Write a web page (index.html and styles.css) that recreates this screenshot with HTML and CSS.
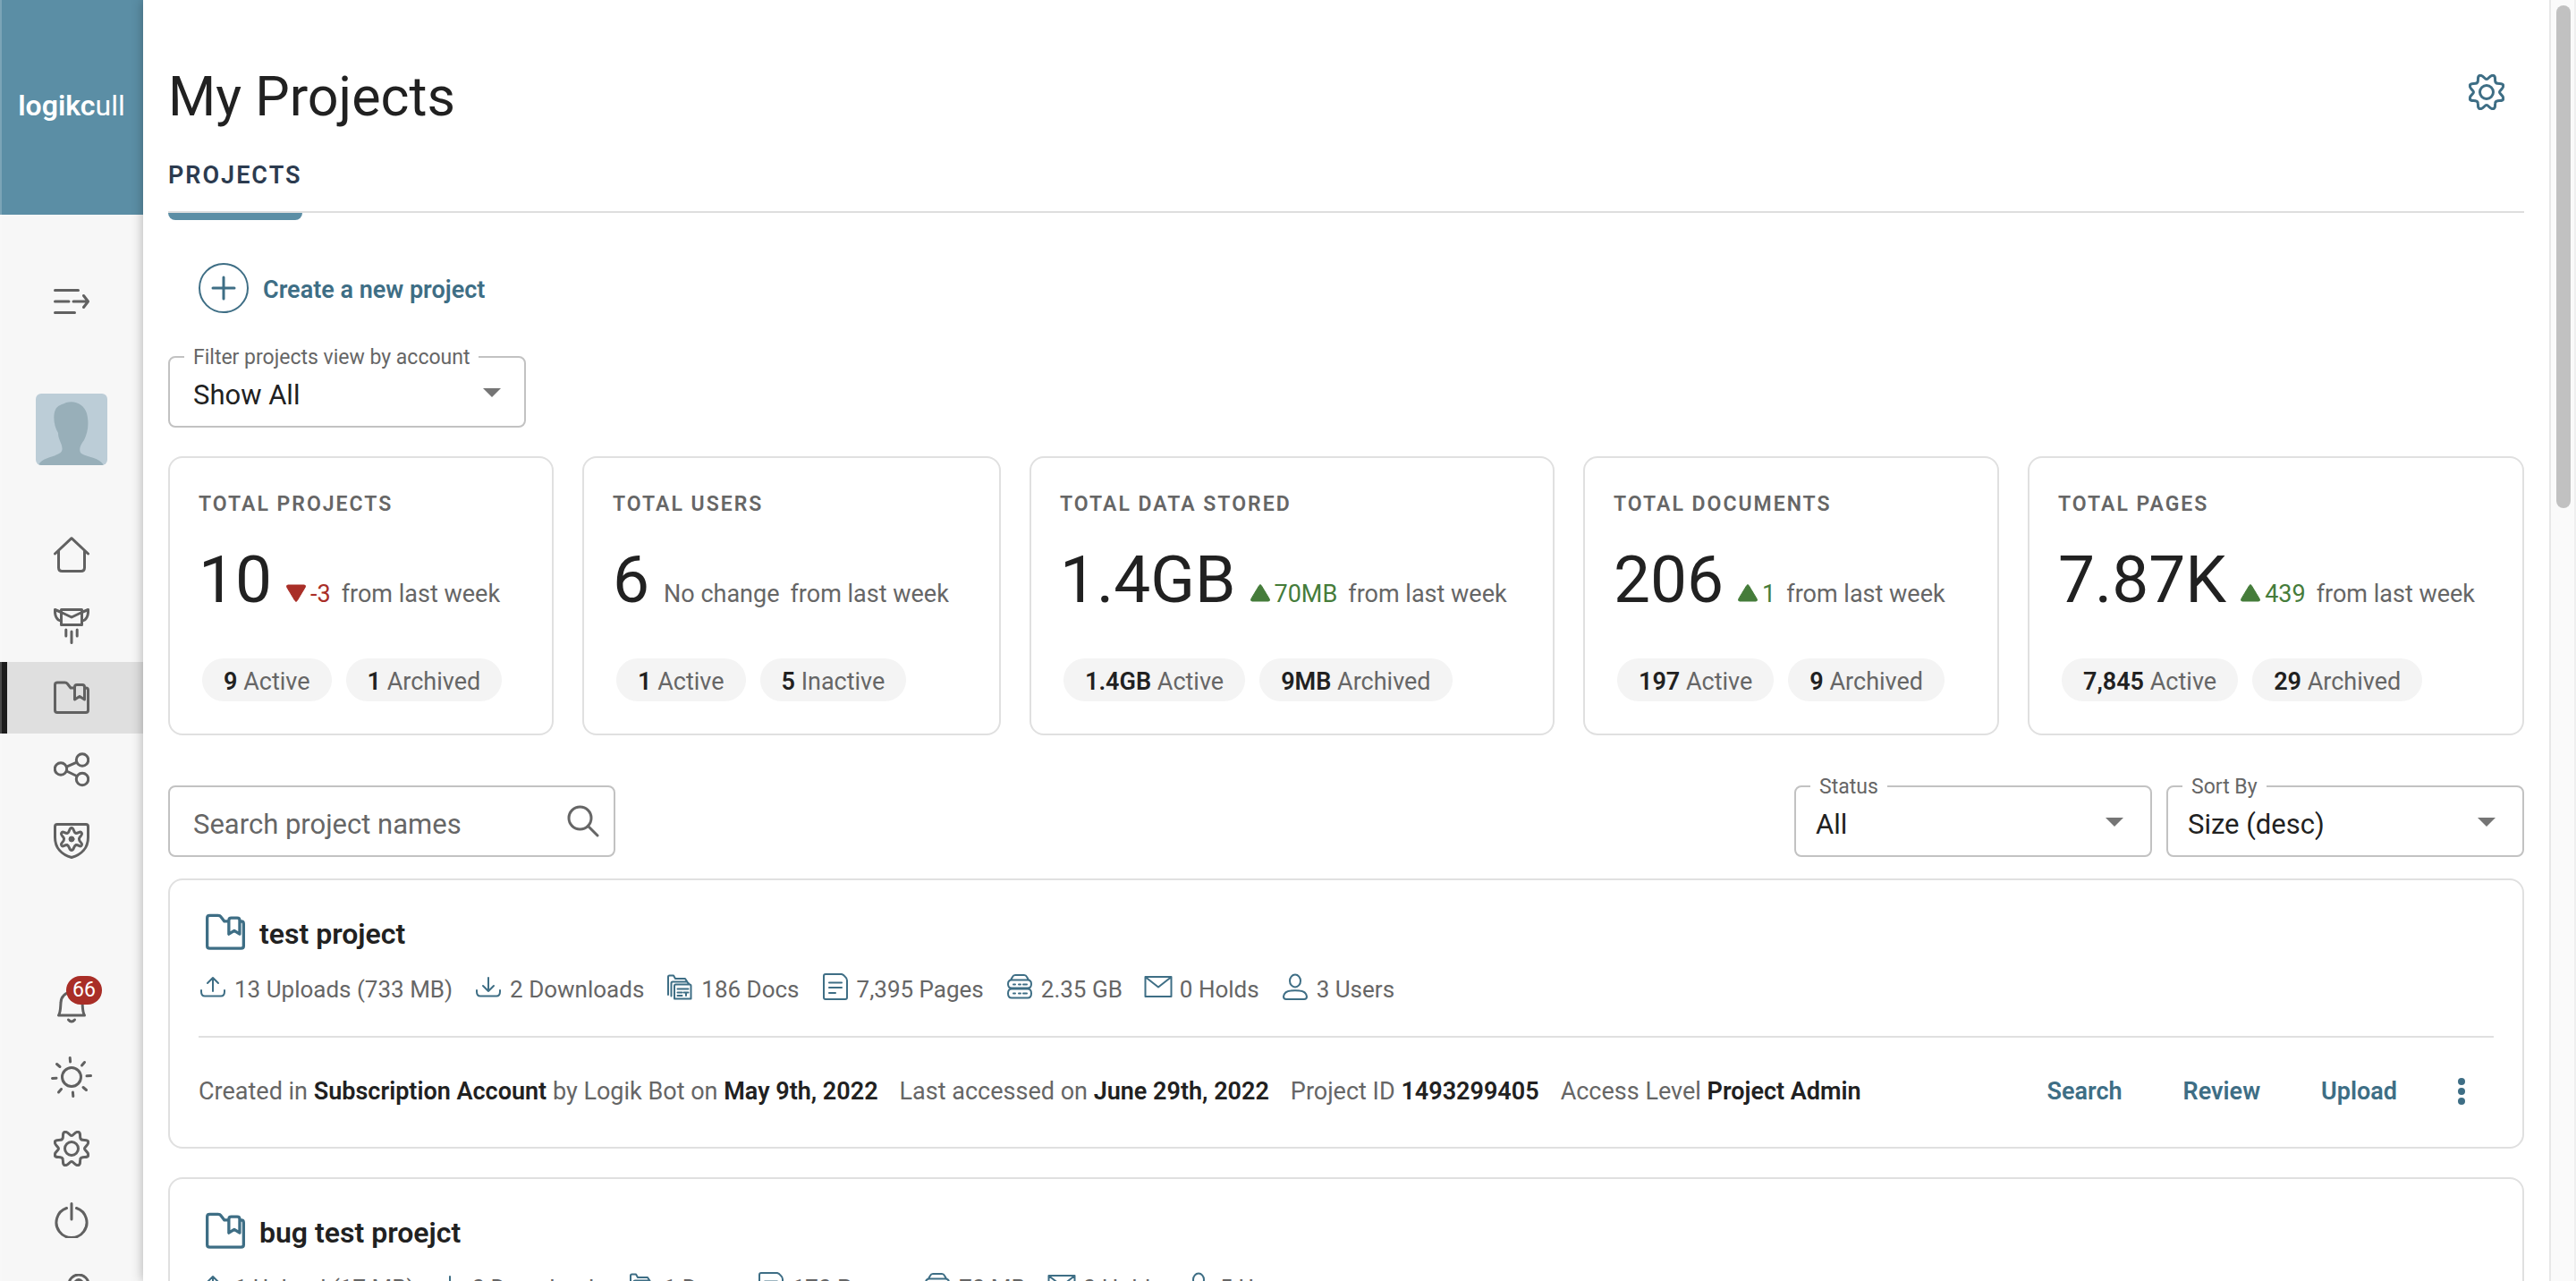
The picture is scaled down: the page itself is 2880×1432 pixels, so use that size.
FILE: index.html
```html
<!DOCTYPE html>
<html lang="en">
<head>
<meta charset="utf-8">
<title>My Projects</title>
<link rel="stylesheet" href="styles.css">
</head>
<body>
<svg class="sprite" aria-hidden="true">
  <symbol id="i-menu" viewBox="0 0 40 40"><path d="M1.5 8.500h26M1.5 21H17M22 21h16M33.500 14.500L38.500 21l-5 6.500M1.500 33.500H23.500"/></symbol>
  <symbol id="i-home" viewBox="0 0 40 40"><path d="M1.500 19L20 1.700 38.500 19M5.500 16v18.500q0 4 4 4h21q4 0 4-4V16"/></symbol>
  <symbol id="i-mailwings" viewBox="0 0 40 40"><path d="M8.500 1.500h23v17h-23zM1.500 1.500L8.500 4.500 20 10l11.500-5.500 7-3C39 8 36.500 14 31.500 14M1.500 1.500C1 8 3.500 14 8.500 14M13.800 24v7M20 26v12.500M26.200 24v7"/></symbol>
  <symbol id="i-folder" viewBox="0 0 40 40"><path d="M23.500 9H19l-3.500-4.500Q14.500 3 12.500 3H4Q1.500 3 1.500 5.500v28.500q0 2.500 2.500 2.500h32q2.500 0 2.500-2.500V11.500Q38.500 9 36 9h-1.500M23.500 22V8q0-2.500 2.500-2.500h6q2.500 0 2.500 2.500v14L29 18.500z"/></symbol>
  <symbol id="i-share" viewBox="0 0 40 40"><circle cx="8" cy="19.500" r="6.700"/><circle cx="32" cy="9.500" r="6.700"/><circle cx="32" cy="31" r="6.700"/><path d="M14.500 17.200l11.300-5M14.500 22l11.300 5.500"/></symbol>
  <symbol id="i-shield" viewBox="0 0 40 40"><path d="M4 1.500h32q2.500 0 2.500 2.500v12C38.500 28 31 35.500 20 38.500 9 35.500 1.500 28 1.500 16V4q0-2.500 2.500-2.500z"/><path d="M20 5.500C23 5.500 22 11 25 11.500C28 11.500 30 8 31.500 11.500C32.500 14.500 28 15 28.500 18C28 21 32.500 22 31.500 24.500C30 28 28 24 25 24.500C22 25.500 23 30.500 20 30.500C17 30.500 18 25.500 15 24.500C12 24 10 28 8.500 24.500C7.500 22 12 21 11.500 18C12 15 7.500 14.500 8.500 11.500C10 8 12 11.500 15 11.500C18 11 17 5.500 20 5.500z"/><circle class="solid" cx="20" cy="18" r="3"/></symbol>
  <symbol id="i-bell" viewBox="0 0 40 40"><path d="M5.500 31h29C32 27 32.500 21 32 17A12 12 0 0 0 8 17C7.500 21 8 27 5.500 31zM16.500 36q3.500 4 7 0"/></symbol>
  <symbol id="i-sun" viewBox="0 0 48 48"><circle cx="24" cy="24" r="10.500"/><path d="M22.200 2.500l.4 4.500M25.400 41l.4 4.500M2.500 25.500L7 25.200M41 22.800l4.500-.3M7.500 9.500l3.500 3M37 35.500l3.500 3M38.500 7.500l-3 3.500M12.500 37.500l-3 3.500"/></symbol>
  <symbol id="i-gear" viewBox="0 0 40 40"><path d="M20 5.500C17.800 5.500 16.500 1.300 13 1.300C9.500 1.300 10.800 5 10.300 7.800C10.100 9.300 9.300 10.100 7.800 10.300C5 10.800 1.300 9.500 1.300 13C1.300 16.500 5.500 17.800 5.500 20C5.500 22.200 1.300 23.500 1.300 27C1.300 30.500 5 29.200 7.800 29.700C9.300 29.900 10.100 30.700 10.300 32.200C10.800 35 9.500 38.700 13 38.700C16.500 38.700 17.800 34.500 20 34.500C22.200 34.500 23.500 38.700 27 38.700C30.500 38.700 29.200 35 29.700 32.200C29.900 30.700 30.700 29.900 32.200 29.700C35 29.200 38.700 30.500 38.700 27C38.700 23.500 34.500 22.200 34.500 20C34.500 17.800 38.700 16.500 38.700 13C38.700 9.500 35 10.800 32.200 10.300C30.700 10.100 29.900 9.300 29.700 7.800C29.200 5 30.500 1.300 27 1.300C23.500 1.300 22.200 5.500 20 5.500z"/><circle cx="20" cy="20" r="7.500"/></symbol>
  <symbol id="i-power" viewBox="0 0 40 40"><path d="M14.500 6.500a17 17 0 1 0 11 0M20 1.500v17.500"/></symbol>
  <symbol id="i-help" viewBox="0 0 40 40"><circle cx="28" cy="12" r="11"/><path d="M24 9q4-5 8 0v4l-4 3M2 38q6-8 16-8"/></symbol>
  <symbol id="i-plus" viewBox="0 0 28 28"><path d="M14 2v24M2 14h24"/></symbol>
  <symbol id="i-search" viewBox="0 0 36 36"><circle cx="14.500" cy="14.500" r="12.500"/><path d="M23.500 23.500L34 34"/></symbol>
  <symbol id="i-up" viewBox="0 0 22 20"><path class="solid" d="M9.800 1.500q1.200-1.800 2.400 0l9 15q1 2.500-1.200 2.500H2Q-.2 19 .8 16.500z"/></symbol>
  <symbol id="i-down" viewBox="0 0 22 20"><path class="solid" d="M9.800 18.500q1.200 1.800 2.400 0l9-15Q22.200 1 20 1H2Q-.2 1 .8 3.500z"/></symbol>
  <symbol id="i-upload" viewBox="0 0 32 32"><path d="M3 19v1.500Q3 25.500 7 25.500h18q4 0 4-5V19M16 5v15M10 11l6-6 6 6"/></symbol>
  <symbol id="i-download" viewBox="0 0 32 32"><path d="M3 19v1.500Q3 25.500 7 25.500h18q4 0 4-5V19M16 5v15M10 14l6 6 6-6"/></symbol>
  <symbol id="i-docs" viewBox="0 0 32 32"><path d="M3 24V4q0-1.500 1.500-1.500H9L11 6h11l2 3M6.500 25.500V11q0-1.500 1.500-1.500h16l3 3M10 28.500V14q0-1.500 1.500-1.500H27q1.500 0 1.500 1.500v14.500zM13.500 17.500h12M13.500 21.500h5M13.500 25h5M20.500 21.500h5M23 21.500V25"/></symbol>
  <symbol id="i-page" viewBox="0 0 32 32"><path d="M5 1h18q2 .5 3.500 2.500Q29 5.500 29 8v19q0 2-2 2H5q-2 0-2-2V3q0-2 2-2zM9 10.500h14M9 16h14M9 22h7"/></symbol>
  <symbol id="i-data" viewBox="0 0 32 32"><path d="M6 7.500L8 4q1-2 3-2h10q2 0 3 2l2 3.500M7 7.500h18q4 0 4 4.500t-4 4.500H7q-4 0-4-4.500t4-4.500zM7 17.500h18q4 0 4 5t-4 5H7q-4 0-4-5t4-5zM9 12.500h2M15 12.500h2M20 12.500h4M9 22.500h2M15 22.500h2M20 22.500h4"/></symbol>
  <symbol id="i-hold" viewBox="0 0 32 32"><path d="M1.500 4h29v22h-29zM2 4.500l14 11 14-11"/></symbol>
  <symbol id="i-user" viewBox="0 0 32 32"><ellipse cx="16" cy="8.500" rx="6" ry="7"/><path d="M3 26q1-6 8-6.500 5-.5 10 0 7 .5 8 6.500 0 3-3 3H6q-3 0-3-3z"/></symbol>
</svg>

<div class="app">
  <aside class="sidebar">
    <a class="logo" href="#" aria-label="logikcull home"><span>logikc</span><span class="logo-tail">ull</span></a>
    <button class="toggle" type="button" aria-label="Expand menu"><svg class="icon"><use href="#i-menu"/></svg></button>
    <a class="avatar" href="#" aria-label="Profile">
      <svg viewBox="0 0 80 80"><path d="M3 80C6 72 20 71 26 67C30 65 30 62 29 58C28 54 25 50 25 44C20 36 19 24 22 18C24 13 30 12 34 10C44 7 54 12 57 22C60 34 58 44 54 52C50 57 48 62 50 66C54 71 70 70 76 80z"/></svg>
    </a>
    <nav class="nav" aria-label="Main">
      <a href="#" aria-label="Home"><svg class="icon"><use href="#i-home"/></svg></a>
      <a href="#" aria-label="Holds"><svg class="icon"><use href="#i-mailwings"/></svg></a>
      <a href="#" class="current" aria-current="page" aria-label="Projects"><svg class="icon"><use href="#i-folder"/></svg></a>
      <a href="#" aria-label="Shares"><svg class="icon"><use href="#i-share"/></svg></a>
      <a href="#" aria-label="Admin"><svg class="icon"><use href="#i-shield"/></svg></a>
    </nav>
    <nav class="nav nav-tools" aria-label="Tools">
      <a href="#" aria-label="Notifications"><svg class="icon"><use href="#i-bell"/></svg><span class="badge">66</span></a>
      <a href="#" aria-label="Theme"><svg class="icon icon-sun"><use href="#i-sun"/></svg></a>
      <a href="#" aria-label="Settings"><svg class="icon"><use href="#i-gear"/></svg></a>
      <a href="#" aria-label="Log out"><svg class="icon"><use href="#i-power"/></svg></a>
      <a href="#" aria-label="Help"><svg class="icon"><use href="#i-help"/></svg></a>
    </nav>
  </aside>

  <main class="main">
    <header class="header">
      <h1>My Projects</h1>
      <button class="settings" type="button" aria-label="Page settings"><svg class="icon"><use href="#i-gear"/></svg></button>
    </header>
    <nav class="tabs" aria-label="Sections"><a class="tab" href="#" aria-current="page">PROJECTS</a></nav>

    <button class="create" type="button"><span class="create-ring"><svg><use href="#i-plus"/></svg></span><span class="create-label">Create a new project</span></button>

    <div class="field">
      <label for="account">Filter projects view by account</label>
      <select id="account"><option>Show All</option></select>
    </div>

    <section class="totals" aria-label="Totals">
      <article class="total">
        <h2>TOTAL PROJECTS</h2>
        <p class="figure"><span class="value">10</span><span class="change down"><svg><use href="#i-down"/></svg>-3</span><span class="since">from last week</span></p>
        <p class="pills"><span class="pill"><b>9</b> Active</span><span class="pill"><b>1</b> Archived</span></p>
      </article>
      <article class="total">
        <h2>TOTAL USERS</h2>
        <p class="figure"><span class="value">6</span><span class="change">No change</span><span class="since">from last week</span></p>
        <p class="pills"><span class="pill"><b>1</b> Active</span><span class="pill"><b>5</b> Inactive</span></p>
      </article>
      <article class="total">
        <h2>TOTAL DATA STORED</h2>
        <p class="figure"><span class="value">1.4GB</span><span class="change up"><svg><use href="#i-up"/></svg>70MB</span><span class="since">from last week</span></p>
        <p class="pills"><span class="pill"><b>1.4GB</b> Active</span><span class="pill"><b>9MB</b> Archived</span></p>
      </article>
      <article class="total">
        <h2>TOTAL DOCUMENTS</h2>
        <p class="figure"><span class="value">206</span><span class="change up"><svg><use href="#i-up"/></svg>1</span><span class="since">from last week</span></p>
        <p class="pills"><span class="pill"><b>197</b> Active</span><span class="pill"><b>9</b> Archived</span></p>
      </article>
      <article class="total">
        <h2>TOTAL PAGES</h2>
        <p class="figure"><span class="value">7.87K</span><span class="change up"><svg><use href="#i-up"/></svg>439</span><span class="since">from last week</span></p>
        <p class="pills"><span class="pill"><b>7,845</b> Active</span><span class="pill"><b>29</b> Archived</span></p>
      </article>
    </section>

    <div class="toolbar">
      <div class="search">
        <input type="search" placeholder="Search project names" aria-label="Search project names">
        <svg><use href="#i-search"/></svg>
      </div>
      <div class="field field-compact">
        <label for="status">Status</label>
        <select id="status"><option>All</option></select>
      </div>
      <div class="field field-compact">
        <label for="sort">Sort By</label>
        <select id="sort"><option>Size (desc)</option></select>
      </div>
    </div>

    <section class="projects" aria-label="Projects">
      <article class="project">
        <h3><svg class="icon"><use href="#i-folder"/></svg>test project</h3>
        <ul class="stats">
          <li><svg><use href="#i-upload"/></svg>13 Uploads (733 MB)</li>
          <li><svg><use href="#i-download"/></svg>2 Downloads</li>
          <li><svg><use href="#i-docs"/></svg>186 Docs</li>
          <li><svg><use href="#i-page"/></svg>7,395 Pages</li>
          <li><svg><use href="#i-data"/></svg>2.35 GB</li>
          <li><svg><use href="#i-hold"/></svg>0 Holds</li>
          <li><svg><use href="#i-user"/></svg>3 Users</li>
        </ul>
        <footer class="details">
          <p class="meta">
            <span>Created in <b>Subscription Account</b> by Logik Bot on <b>May 9th, 2022</b></span>
            <span>Last accessed on <b>June 29th, 2022</b></span>
            <span>Project ID <b>1493299405</b></span>
            <span>Access Level <b>Project Admin</b></span>
          </p>
          <div class="actions">
            <a href="#">Search</a>
            <a href="#">Review</a>
            <a href="#">Upload</a>
            <button class="more" type="button" aria-label="More actions"><i></i><i></i><i></i></button>
          </div>
        </footer>
      </article>
      <article class="project">
        <h3><svg class="icon"><use href="#i-folder"/></svg>bug test proejct</h3>
        <ul class="stats">
          <li><svg><use href="#i-upload"/></svg>1 Upload (17 MB)</li>
          <li><svg><use href="#i-download"/></svg>0 Downloads</li>
          <li><svg><use href="#i-docs"/></svg>1 Docs</li>
          <li><svg><use href="#i-page"/></svg>170 Pages</li>
          <li><svg><use href="#i-data"/></svg>70 MB</li>
          <li><svg><use href="#i-hold"/></svg>0 Holds</li>
          <li><svg><use href="#i-user"/></svg>5 Users</li>
        </ul>
      </article>
    </section>
  </main>
  <div class="scrollbar" aria-hidden="true"><div class="thumb"></div></div>
</div>
</body>
</html>
```
FILE: styles.css
```css
:root {
  --blue: #3e6e85;
  --teal: #5b8ea5;
  --ink: #212121;
  --grey: #666;
  --line: #e0e0e0;
  --outline: #c2c2c2;
}

*, ::before, ::after { box-sizing: border-box; }

body {
  margin: 0;
  background: #fff;
  color: var(--grey);
  font-family: Roboto, "Noto Sans", sans-serif;
  font-size: 27px;
}

h1, h2, h3, p, ul { margin: 0; padding: 0; }
a { color: inherit; text-decoration: none; }
button { border: 0; padding: 0; background: none; font: inherit; color: inherit; cursor: pointer; }
svg { display: block; flex: none; fill: none; stroke: currentColor; stroke-linecap: round; stroke-linejoin: round; overflow: visible; }
.sprite { position: absolute; width: 0; height: 0; }
.solid { fill: currentColor; stroke-width: 1; }
.icon { width: 40px; height: 40px; stroke-width: 3; }

.app { display: flex; height: 100vh; overflow: hidden; }

/* Sidebar */
.sidebar {
  position: relative;
  flex: none;
  display: flex;
  flex-direction: column;
  align-items: center;
  width: 160px;
  background: #f7f7f7;
  color: #616161;
}
.sidebar::after {
  content: "";
  position: absolute;
  inset: 0;
  pointer-events: none;
  box-shadow: inset 2px 0 rgba(255, 255, 255, .2);
}
.logo {
  flex: none;
  display: flex;
  align-items: center;
  justify-content: center;
  width: 100%;
  height: 240px;
  padding-bottom: 4px;
  background: var(--teal);
  color: #fff;
  font-size: 32px;
  font-weight: 600;
}
.logo-tail { font-weight: 400; }
.toggle { flex: none; display: grid; place-items: center; width: 100%; height: 80px; margin-top: 56px; }
.avatar { flex: none; width: 80px; height: 80px; margin-top: 64px; border-radius: 6px; background: #bccdd7; overflow: hidden; }
.avatar svg { fill: #98afb9; stroke: none; }
.nav { flex: none; width: 100%; margin-top: 60px; }
.nav-tools { margin-top: 104px; }
.nav a { position: relative; display: grid; place-items: center; height: 80px; }
.nav .current { background: #dfdfdf; box-shadow: inset 8px 0 #1c1c1c; }
.icon-sun { width: 48px; height: 48px; }
.badge {
  position: absolute;
  top: 7px;
  left: 74px;
  width: 40px;
  border-radius: 16px;
  background: #a92e27;
  color: #fff;
  font-size: 23px;
  line-height: 32px;
  text-align: center;
}

/* Page */
.main {
  position: relative;
  flex: 1;
  min-width: 0;
  overflow: hidden;
  padding: 72px 28px 0;
  background: #fff;
  box-shadow: 0 0 12px rgba(0, 0, 0, .3);
}
.header { display: flex; justify-content: space-between; }
h1 { color: var(--ink); font-size: 61px; font-weight: 400; line-height: 72px; }
.settings { height: 40px; margin: 11px 22px 0 0; color: var(--blue); }
.tabs { display: flex; margin-top: 36px; border-bottom: 2px solid #dedede; }
.tab {
  position: relative;
  padding-bottom: 24px;
  color: #2c3b4f;
  font-size: 27px;
  font-weight: 600;
  letter-spacing: 2px;
  line-height: 32px;
}
.tab::after {
  content: "";
  position: absolute;
  top: 100%;
  left: 0;
  width: 100%;
  height: 10px;
  border-top: 2px solid #dedede;
  border-radius: 0 0 8px 8px;
  background: var(--teal);
}
.create {
  display: flex;
  align-items: center;
  gap: 16px;
  margin: 56px 0 48px 34px;
  color: var(--blue);
  font-weight: 600;
}
.create-ring { display: grid; place-items: center; width: 56px; height: 56px; border: 2px solid; border-radius: 50%; }
.create-ring svg { width: 28px; height: 28px; stroke-width: 3; }
.create-label { padding-top: 4px; }

/* Form fields */
.field { position: relative; width: 400px; }
.field label {
  position: absolute;
  top: -10px;
  left: 18px;
  padding: 0 10px;
  background: #fff;
  font-size: 23px;
  line-height: 24px;
}
.field select, .search input {
  display: block;
  width: 100%;
  height: 80px;
  margin: 0;
  padding: 6px 26px 0;
  border: 2px solid var(--outline);
  border-radius: 8px;
  outline: 0;
  background: none;
  appearance: none;
  font: inherit;
  font-size: 31px;
  color: var(--ink);
}
.field::after {
  content: "";
  position: absolute;
  top: 36px;
  right: 28px;
  border: 10px solid transparent;
  border-top-color: #757575;
  border-bottom: 0;
  pointer-events: none;
}
.field-compact select { padding-left: 22px; }
.field-compact::after { right: 32px; }
.search { position: relative; width: 500px; margin-right: auto; }
.search input::placeholder { color: var(--grey); opacity: 1; }
.search svg { position: absolute; top: 22px; right: 18px; width: 36px; height: 36px; stroke-width: 3; }

/* Totals */
.totals { display: grid; grid-template-columns: 431fr 468fr 587fr 465fr 555fr; gap: 32px; margin-top: 32px; }
.total { min-width: 0; padding: 36px 32px; border: 2px solid var(--line); border-radius: 16px; white-space: nowrap; }
h2 { font-size: 23px; font-weight: 600; letter-spacing: 2px; line-height: 32px; }
.figure { display: flex; align-items: baseline; margin-top: 28px; line-height: 32px; }
.value { margin-right: 16px; color: var(--ink); font-size: 73px; line-height: 80px; }
.change { display: flex; align-items: baseline; gap: 5px; margin-right: 12px; }
.change svg { width: 22px; height: 20px; }
.up { color: #457c3a; }
.down { color: #a92e27; }
.pills { display: flex; gap: 16px; margin: 48px 4px 0; }
.pill { height: 48px; padding: 2px 24px 0; border-radius: 24px; background: #f4f4f4; font-size: 27px; line-height: 48px; }
b { color: var(--ink); font-weight: 600; }

/* Project list */
.toolbar { display: flex; gap: 16px; margin: 56px 0 24px; }
.projects { display: grid; gap: 32px; }
.project { padding: 36px 32px 42px; border: 2px solid var(--line); border-radius: 16px; white-space: nowrap; }
h3 { display: flex; gap: 16px; padding-left: 8px; color: var(--ink); font-size: 32px; font-weight: 600; line-height: 48px; }
h3 .icon { width: 44px; height: 44px; color: var(--blue); }
.stats { display: flex; gap: 24px; margin-top: 20px; list-style: none; font-size: 26px; line-height: 36px; }
.stats li { display: flex; gap: 8px; }
.stats svg { width: 32px; height: 32px; stroke-width: 2; color: var(--blue); }
.details { display: flex; align-items: center; justify-content: space-between; margin-top: 34px; padding-top: 40px; border-top: 2px solid var(--line); line-height: 40px; }
.meta { display: flex; gap: 24px; }
.actions { display: flex; align-items: center; gap: 68px; padding-right: 32px; color: var(--blue); font-weight: 600; }
.more { display: grid; gap: 3px; }
.more i { width: 8px; height: 8px; border-radius: 50%; background: currentColor; }

/* Scrollbar */
.scrollbar {
  position: relative;
  display: grid;
  grid-template-rows: 562fr 858fr;
  width: 30px;
  padding: 6px;
  border-left: 2px solid #e8e8e8;
  border-right: 2px solid #efefef;
  background: #fafafa;
}
.thumb { width: 16px; border-radius: 8px; background: #c1c1c1; }
```
